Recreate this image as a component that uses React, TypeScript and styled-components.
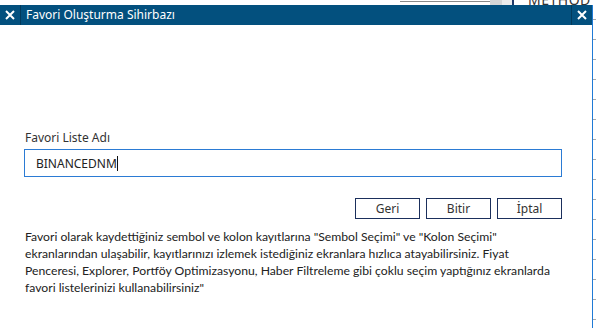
import React from 'react';
import styled, { createGlobalStyle } from 'styled-components';

const GlobalStyle = createGlobalStyle`
  html, body {
    margin: 0;
    padding: 0;
    background: #ffffff;
  }
  body {
    width: 596px;
    height: 328px;
    overflow: hidden;
    font-family: 'Noto Sans', 'Liberation Sans', sans-serif;
  }
`;

const Screen = styled.div`
  width: 596px;
  height: 328px;
  display: flex;
  flex-direction: column;
  overflow: hidden;
`;

const BackStrip = styled.div`
  height: 5px;
  display: flex;
  align-items: flex-end;
  overflow: hidden;
  background: #ffffff;
`;

const StripLine = styled.div<{ $width: number }>`
  width: ${(p) => p.$width}px;
  height: 4px;
  border-top: 1px solid #8a8a8a;
  align-self: flex-start;
  margin-top: 1px;
`;

const StripBlock = styled.div<{ $width: number; $color: string }>`
  width: ${(p) => p.$width}px;
  height: 5px;
  background: ${(p) => p.$color};
`;

const StripText = styled.div`
  font-size: 14px;
  line-height: 10px;
  height: 5px;
  color: #333;
  letter-spacing: 0.5px;
  overflow: hidden;
  display: flex;
  align-items: flex-end;
`;

const Middle = styled.div`
  flex: 1;
  display: flex;
`;

const Dialog = styled.div`
  width: 592px;
  display: flex;
  flex-direction: column;
  border-right: 1px solid #1f7ad6;
  background: #ffffff;
`;

const TitleBar = styled.div`
  height: 20px;
  display: flex;
  align-items: stretch;
  background: #03507e;
  color: #ffffff;
`;

const IconBox = styled.div<{ $side: 'left' | 'right' }>`
  width: 20px;
  display: flex;
  align-items: center;
  justify-content: center;
  ${(p) => (p.$side === 'left' ? 'border-right' : 'border-left')}: 1px solid #023a5c;
`;

const Title = styled.div`
  flex: 1;
  padding-left: 5px;
  font-size: 12px;
  line-height: 20px;
`;

const Body = styled.div`
  flex: 1;
  display: flex;
  flex-direction: column;
  padding: 105px 30px 0 25px;
`;

const Label = styled.div`
  font-size: 12px;
  line-height: 16px;
  color: #333333;
`;

const Input = styled.div`
  margin-top: 3px;
  margin-left: -1px;
  height: 26px;
  border: 1px solid #2b7bd4;
  display: flex;
  align-items: center;
  padding-left: 11px;
  font-size: 12px;
  color: #222222;
`;

const Caret = styled.span`
  width: 1px;
  height: 15px;
  background: #111;
`;

const Buttons = styled.div`
  margin-top: 21px;
  display: flex;
  justify-content: flex-end;
  gap: 6px;
`;

const Button = styled.div`
  width: 63px;
  height: 19px;
  border: 1px solid #1b2f5c;
  font-size: 12px;
  line-height: 19px;
  text-align: center;
  color: #333333;
`;

const Note = styled.p`
  margin: 9px 0 0;
  font-family: Lato, 'Noto Sans', sans-serif;
  font-size: 12.2px;
  line-height: 17px;
  color: #222222;
  white-space: nowrap;
`;

const RightEdge = styled.div`
  flex: 1;
  background:
    repeating-linear-gradient(
      to bottom,
      transparent 0,
      transparent 14px,
      #a8a8a8 14px,
      #a8a8a8 15px,
      transparent 15px,
      transparent 20px
    );
`;

const Cross = () => (
  <svg width="10" height="10" viewBox="0 0 10 10">
    <path d="M1 1 L9 9 M9 1 L1 9" stroke="#ffffff" strokeWidth="2" />
  </svg>
);

export default function App() {
  return (
    <Screen>
      <GlobalStyle />
      <BackStrip>
        <StripBlock $width={400} $color="#ffffff" />
        <StripLine $width={90} />
        <StripBlock $width={12} $color="#d6d6d6" />
        <StripBlock $width={10} $color="#ececec" />
        <StripBlock $width={2} $color="#203a6a" />
        <StripBlock $width={14} $color="#ffffff" />
        <StripText>METHOD</StripText>
      </BackStrip>
      <Middle>
        <Dialog>
          <TitleBar>
            <IconBox $side="left">
              <Cross />
            </IconBox>
            <Title>Favori Oluşturma Sihirbazı</Title>
            <IconBox $side="right">
              <Cross />
            </IconBox>
          </TitleBar>
          <Body>
            <Label>Favori Liste Adı</Label>
            <Input>
              BINANCEDNM
              <Caret />
            </Input>
            <Buttons>
              <Button>Geri</Button>
              <Button>Bitir</Button>
              <Button>İptal</Button>
            </Buttons>
            <Note>
              Favori olarak kaydettiğiniz sembol ve kolon kayıtlarına "Sembol Seçimi" ve "Kolon Seçimi"
              <br />
              ekranlarından ulaşabilir, kayıtlarınızı izlemek istediğiniz ekranlara hızlıca atayabilirsiniz. Fiyat
              <br />
              Penceresi, Explorer, Portföy Optimizasyonu, Haber Filtreleme gibi çoklu seçim yaptığınız ekranlarda
              <br />
              favori listelerinizi kullanabilirsiniz"
            </Note>
          </Body>
        </Dialog>
        <RightEdge />
      </Middle>
    </Screen>
  );
}
